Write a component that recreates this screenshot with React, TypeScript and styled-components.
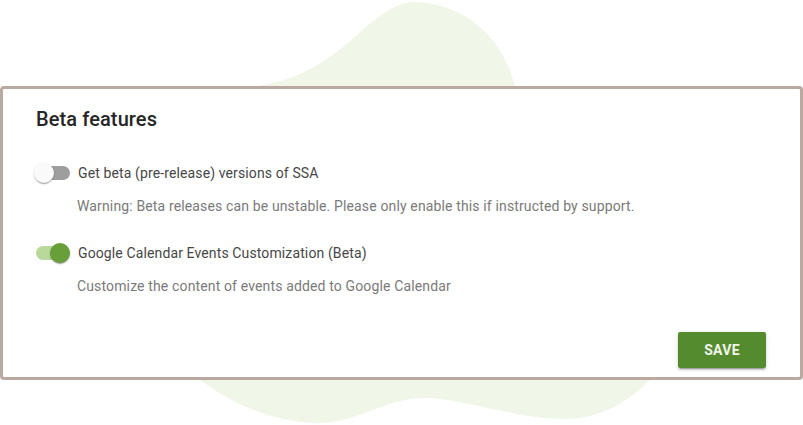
import React, { useState } from "react";
import styled, { createGlobalStyle } from "styled-components";

const Global = createGlobalStyle`
  html, body { margin: 0; padding: 0; background: #ffffff; }
  body { font-family: Roboto, "Liberation Sans", Arial, sans-serif; }
  * { box-sizing: border-box; }
`;

const Page = styled.div`
  position: relative;
  width: 803px;
  height: 425px;
  overflow: hidden;
  padding-top: 86px;
`;

const Blob = styled.svg`
  position: absolute;
  left: 0;
  top: 0;
  z-index: 0;
`;

const Card = styled.section`
  position: relative;
  z-index: 1;
  width: 803px;
  height: 294px;
  background: #ffffff;
  border: 3px solid #baa9a1;
  border-radius: 4px;
  padding: 18px 34px 0 33px;
  display: flex;
  flex-direction: column;
`;

const Title = styled.h2`
  margin: 0;
  font-size: 20px;
  line-height: 24px;
  font-weight: 500;
  color: #262626;
  letter-spacing: 0.1px;
`;

const FeatureList = styled.div`
  display: flex;
  flex-direction: column;
  gap: 25px;
  margin-top: 30px;
`;

const Feature = styled.div`
  display: flex;
  flex-direction: column;
  gap: 11px;
`;

const ToggleRow = styled.label`
  display: flex;
  align-items: center;
  gap: 7px;
  height: 24px;
  margin-left: -3px;
  cursor: pointer;
`;

const Switch = styled.span`
  position: relative;
  width: 38px;
  height: 20px;
  flex: none;
`;

const Track = styled.span<{ $on: boolean }>`
  position: absolute;
  left: 3px;
  top: 3px;
  width: 34px;
  height: 14px;
  border-radius: 7px;
  background: ${(p) => (p.$on ? "#b9d99b" : "#9e9e9e")};
`;

const Thumb = styled.span<{ $on: boolean }>`
  position: absolute;
  top: 0;
  left: ${(p) => (p.$on ? "17px" : "1px")};
  width: 20px;
  height: 20px;
  border-radius: 50%;
  background: ${(p) => (p.$on ? "#689f38" : "#fafafa")};
  box-shadow: 0 2px 1px -1px rgba(0, 0, 0, 0.2), 0 1px 1px 0 rgba(0, 0, 0, 0.14),
    0 1px 3px 0 rgba(0, 0, 0, 0.12);
`;

const Label = styled.span`
  font-size: 14px;
  line-height: 20px;
  color: #474747;
  letter-spacing: 0.12px;
`;

const Description = styled.p`
  margin: 0 0 0 41px;
  font-size: 14px;
  line-height: 20px;
  color: #7a7a7a;
  letter-spacing: 0.14px;
`;

const Actions = styled.div`
  display: flex;
  justify-content: flex-end;
  margin-top: 36px;
`;

const SaveButton = styled.button`
  width: 88px;
  height: 36px;
  border: none;
  border-radius: 2px;
  background: #558b2f;
  color: #f1f5ec;
  font-family: Roboto, "Liberation Sans", Arial, sans-serif;
  font-size: 14px;
  font-weight: 700;
  letter-spacing: 0.3px;
  text-transform: uppercase;
  box-shadow: 0 3px 1px -2px rgba(0, 0, 0, 0.2), 0 2px 2px 0 rgba(0, 0, 0, 0.14),
    0 1px 5px 0 rgba(0, 0, 0, 0.12);
  cursor: pointer;
`;

const features = [
  {
    label: "Get beta (pre-release) versions of SSA",
    desc: "Warning: Beta releases can be unstable. Please only enable this if instructed by support.",
    on: false,
  },
  {
    label: "Google Calendar Events Customization (Beta)",
    desc: "Customize the content of events added to Google Calendar",
    on: true,
  },
];

export default function App() {
  const [state, setState] = useState(features.map((f) => f.on));
  return (
    <>
      <Global />
      <Page>
        <Blob width="803" height="425" viewBox="0 0 803 425">
          <path
            d="M257,86 C300,80 330,60 360,32 C385,10 400,2 415,2 C460,4 500,30 515,86 L650,380 C620,410 590,420 560,419 C510,417 460,398 425,398 C385,398 360,422 320,423 C270,423 230,402 200,380 Z"
            fill="#f1f7e8"
          />
        </Blob>
        <Card>
          <Title>Beta features</Title>
          <FeatureList>
            {features.map((f, i) => (
              <Feature key={f.label}>
                <ToggleRow
                  onClick={() =>
                    setState((s) => s.map((v, j) => (j === i ? !v : v)))
                  }
                >
                  <Switch>
                    <Track $on={state[i]} />
                    <Thumb $on={state[i]} />
                  </Switch>
                  <Label>{f.label}</Label>
                </ToggleRow>
                <Description>{f.desc}</Description>
              </Feature>
            ))}
          </FeatureList>
          <Actions>
            <SaveButton>Save</SaveButton>
          </Actions>
        </Card>
      </Page>
    </>
  );
}
